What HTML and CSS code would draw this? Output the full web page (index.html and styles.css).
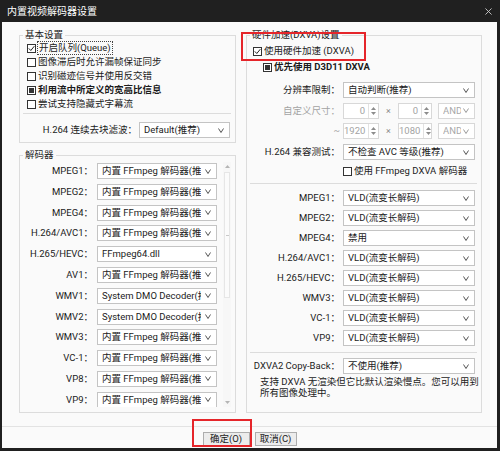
FILE: index.html
```html
<!DOCTYPE html>
<html lang="zh-CN">
<head>
<meta charset="utf-8">
<title>内置视频解码器设置</title>
<link rel="stylesheet" href="styles.css">
</head>
<body>
<div class="window">
  <div class="titlebar">
    <span class="title">内置视频解码器设置</span>
    <svg class="close" viewBox="0 0 8 8"><path d="M0.5 0.5 7.5 7.5 M7.5 0.5 0.5 7.5"/></svg>
  </div>
  <div class="client">
    <div class="main">
      <div class="col-left">
        <fieldset class="group g-basic">
          <legend>基本设置</legend>
          <div class="checks">
            <div class="chk"><span class="box"><svg class="tick" viewBox="0 0 7 7"><path d="M0.8 3.4 2.8 5.5 6.3 1.2"/></svg></span><span class="txt focus">开启队列(Queue)</span></div>
            <div class="chk"><span class="box"></span><span class="txt">图像滞后时允许漏帧保证同步</span></div>
            <div class="chk"><span class="box"></span><span class="txt">识别磁迹信号并使用反交错</span></div>
            <div class="chk"><span class="box ind"><span class="fill"></span></span><span class="txt bold">利用流中所定义的宽高比信息</span></div>
            <div class="chk"><span class="box"></span><span class="txt">尝试支持隐藏式字幕流</span></div>
          </div>
          <div class="sep"></div>
          <div class="deblock">
            <span class="lbl">H.264 连续去块滤波：</span>
            <div class="select w-deblock"><span class="val">Default(推荐)</span><svg class="chev" viewBox="0 0 6 5"><path d="M0.5 0.5 3 4.5 5.5 0.5"/></svg></div>
          </div>
        </fieldset>
        <fieldset class="group g-dec">
          <legend>解码器</legend>
          <div class="scrollarea">
            <div class="dec-list">
              <div class="drow"><span class="lbl">MPEG1：</span><div class="select"><span class="val">内置 FFmpeg 解码器(推荐)</span><svg class="chev" viewBox="0 0 6 5"><path d="M0.5 0.5 3 4.5 5.5 0.5"/></svg></div></div>
              <div class="drow"><span class="lbl">MPEG2：</span><div class="select"><span class="val">内置 FFmpeg 解码器(推荐)</span><svg class="chev" viewBox="0 0 6 5"><path d="M0.5 0.5 3 4.5 5.5 0.5"/></svg></div></div>
              <div class="drow"><span class="lbl">MPEG4：</span><div class="select"><span class="val">内置 FFmpeg 解码器(推荐)</span><svg class="chev" viewBox="0 0 6 5"><path d="M0.5 0.5 3 4.5 5.5 0.5"/></svg></div></div>
              <div class="drow"><span class="lbl">H.264/AVC1：</span><div class="select"><span class="val">内置 FFmpeg 解码器(推荐)</span><svg class="chev" viewBox="0 0 6 5"><path d="M0.5 0.5 3 4.5 5.5 0.5"/></svg></div></div>
              <div class="drow"><span class="lbl">H.265/HEVC：</span><div class="select"><span class="val">FFmpeg64.dll</span><svg class="chev" viewBox="0 0 6 5"><path d="M0.5 0.5 3 4.5 5.5 0.5"/></svg></div></div>
              <div class="drow"><span class="lbl">AV1：</span><div class="select"><span class="val">内置 FFmpeg 解码器(推荐)</span><svg class="chev" viewBox="0 0 6 5"><path d="M0.5 0.5 3 4.5 5.5 0.5"/></svg></div></div>
              <div class="drow"><span class="lbl">WMV1：</span><div class="select"><span class="val">System DMO Decoder(推荐)</span><svg class="chev" viewBox="0 0 6 5"><path d="M0.5 0.5 3 4.5 5.5 0.5"/></svg></div></div>
              <div class="drow"><span class="lbl">WMV2：</span><div class="select"><span class="val">System DMO Decoder(推荐)</span><svg class="chev" viewBox="0 0 6 5"><path d="M0.5 0.5 3 4.5 5.5 0.5"/></svg></div></div>
              <div class="drow"><span class="lbl">WMV3：</span><div class="select"><span class="val">内置 FFmpeg 解码器(推荐)</span><svg class="chev" viewBox="0 0 6 5"><path d="M0.5 0.5 3 4.5 5.5 0.5"/></svg></div></div>
              <div class="drow"><span class="lbl">VC-1：</span><div class="select"><span class="val">内置 FFmpeg 解码器(推荐)</span><svg class="chev" viewBox="0 0 6 5"><path d="M0.5 0.5 3 4.5 5.5 0.5"/></svg></div></div>
              <div class="drow"><span class="lbl">VP8：</span><div class="select"><span class="val">内置 FFmpeg 解码器(推荐)</span><svg class="chev" viewBox="0 0 6 5"><path d="M0.5 0.5 3 4.5 5.5 0.5"/></svg></div></div>
              <div class="drow"><span class="lbl">VP9：</span><div class="select"><span class="val">内置 FFmpeg 解码器(推荐)</span><svg class="chev" viewBox="0 0 6 5"><path d="M0.5 0.5 3 4.5 5.5 0.5"/></svg></div></div>
            </div>
            <div class="vscroll">
              <svg class="sarrow" viewBox="0 0 5 3"><path d="M0 3 2.5 0 5 3Z"/></svg>
              <div class="thumb"><span class="grip"></span></div>
              <svg class="sarrow" viewBox="0 0 5 3"><path d="M0 0 2.5 3 5 0Z"/></svg>
            </div>
          </div>
        </fieldset>
      </div>

      <fieldset class="group g-hw">
        <legend>硬件加速(DXVA)设置</legend>
        <div class="hw-top">
          <div class="chk"><span class="box"><svg class="tick" viewBox="0 0 7 7"><path d="M0.8 3.4 2.8 5.5 6.3 1.2"/></svg></span><span class="txt">使用硬件加速 (DXVA)</span></div>
          <div class="chk sub"><span class="box ind"><span class="fill"></span></span><span class="txt bold">优先使用 D3D11 DXVA</span></div>
        </div>
        <div class="form">
          <span class="lbl">分辨率限制：</span>
          <div class="select"><span class="val">自动判断(推荐)</span><svg class="chev" viewBox="0 0 6 5"><path d="M0.5 0.5 3 4.5 5.5 0.5"/></svg></div>

          <span class="lbl dim">自定义尺寸：</span>
          <div class="sizes">
            <div class="spin s1"><span class="num">0</span><span class="spbtn"><svg viewBox="0 0 5 3"><path d="M0 3 2.5 0 5 3Z"/></svg><svg viewBox="0 0 5 3"><path d="M0 0 2.5 3 5 0Z"/></svg></span></div>
            <span class="times">×</span>
            <div class="spin s2"><span class="num">0</span><span class="spbtn"><svg viewBox="0 0 5 3"><path d="M0 3 2.5 0 5 3Z"/></svg><svg viewBox="0 0 5 3"><path d="M0 0 2.5 3 5 0Z"/></svg></span></div>
            <div class="select dis w-and"><span class="val">AND</span><svg class="chev" viewBox="0 0 6 5"><path d="M0.5 0.5 3 4.5 5.5 0.5"/></svg></div>
          </div>

          <span class="lbl dim">~</span>
          <div class="sizes">
            <div class="spin s1"><span class="num">1920</span><span class="spbtn"><svg viewBox="0 0 5 3"><path d="M0 3 2.5 0 5 3Z"/></svg><svg viewBox="0 0 5 3"><path d="M0 0 2.5 3 5 0Z"/></svg></span></div>
            <span class="times">×</span>
            <div class="spin s2"><span class="num">1080</span><span class="spbtn"><svg viewBox="0 0 5 3"><path d="M0 3 2.5 0 5 3Z"/></svg><svg viewBox="0 0 5 3"><path d="M0 0 2.5 3 5 0Z"/></svg></span></div>
            <div class="select dis w-and"><span class="val">AND</span><svg class="chev" viewBox="0 0 6 5"><path d="M0.5 0.5 3 4.5 5.5 0.5"/></svg></div>
          </div>

          <span class="lbl">H.264 兼容测试：</span>
          <div class="select"><span class="val">不检查 AVC 等级(推荐)</span><svg class="chev" viewBox="0 0 6 5"><path d="M0.5 0.5 3 4.5 5.5 0.5"/></svg></div>
        </div>
        <div class="chk ffdxva"><span class="box"></span><span class="txt">使用 FFmpeg DXVA 解码器</span></div>
        <div class="sep"></div>
        <div class="form dec">
          <span class="lbl">MPEG1：</span>
          <div class="select"><span class="val">VLD(流变长解码)</span><svg class="chev" viewBox="0 0 6 5"><path d="M0.5 0.5 3 4.5 5.5 0.5"/></svg></div>
          <span class="lbl">MPEG2：</span>
          <div class="select"><span class="val">VLD(流变长解码)</span><svg class="chev" viewBox="0 0 6 5"><path d="M0.5 0.5 3 4.5 5.5 0.5"/></svg></div>
          <span class="lbl">MPEG4：</span>
          <div class="select"><span class="val">禁用</span><svg class="chev" viewBox="0 0 6 5"><path d="M0.5 0.5 3 4.5 5.5 0.5"/></svg></div>
          <span class="lbl">H.264/AVC1：</span>
          <div class="select"><span class="val">VLD(流变长解码)</span><svg class="chev" viewBox="0 0 6 5"><path d="M0.5 0.5 3 4.5 5.5 0.5"/></svg></div>
          <span class="lbl">H.265/HEVC：</span>
          <div class="select"><span class="val">VLD(流变长解码)</span><svg class="chev" viewBox="0 0 6 5"><path d="M0.5 0.5 3 4.5 5.5 0.5"/></svg></div>
          <span class="lbl">WMV3：</span>
          <div class="select"><span class="val">VLD(流变长解码)</span><svg class="chev" viewBox="0 0 6 5"><path d="M0.5 0.5 3 4.5 5.5 0.5"/></svg></div>
          <span class="lbl">VC-1：</span>
          <div class="select"><span class="val">VLD(流变长解码)</span><svg class="chev" viewBox="0 0 6 5"><path d="M0.5 0.5 3 4.5 5.5 0.5"/></svg></div>
          <span class="lbl">VP9：</span>
          <div class="select"><span class="val">VLD(流变长解码)</span><svg class="chev" viewBox="0 0 6 5"><path d="M0.5 0.5 3 4.5 5.5 0.5"/></svg></div>
        </div>
        <div class="sep sep2"></div>
        <div class="form copyback">
          <span class="lbl">DXVA2 Copy-Back：</span>
          <div class="select"><span class="val">不使用(推荐)</span><svg class="chev" viewBox="0 0 6 5"><path d="M0.5 0.5 3 4.5 5.5 0.5"/></svg></div>
        </div>
        <p class="note">支持 DXVA 无渲染但它比默认渲染慢点。您可以用到<br>所有图像处理中。</p>
      </fieldset>
    </div>
    <div class="footer">
      <button class="btn ok">确定(O)</button>
      <button class="btn cancel">取消(C)</button>
    </div>
  </div>
  <div class="mark mark-hw"></div>
  <div class="mark mark-ok"></div>
</div>
</body>
</html>
```

FILE: styles.css
```css
* { box-sizing: border-box; }
html, body { margin: 0; padding: 0; }
body {
  width: 500px;
  height: 451px;
  overflow: hidden;
  background: #202020;
  font-family: Roboto, "Noto Sans CJK SC", sans-serif;
  font-size: 9.5px;
  color: #1b1b1b;
}
.window {
  position: relative;
  width: 500px;
  height: 451px;
  background: #202020;
  padding: 0 3px 3px 2px;
  display: flex;
  flex-direction: column;
}
.titlebar {
  height: 22px;
  flex: none;
  display: flex;
  align-items: center;
  justify-content: space-between;
  padding: 1px 5px 0 5px;
  color: #ffffff;
}
.title { font-size: 10px; line-height: 12px; }
.close { width: 7px; height: 7px; fill: none; stroke: #d0d0d0; stroke-width: 1; }

.client {
  flex: 1;
  background: #fafafa;
  display: flex;
  flex-direction: column;
}
.main {
  height: 404px;
  flex: none;
  display: flex;
  gap: 10px;
  padding: 7px 15px 13px 17px;
}
.col-left {
  width: 217px;
  display: flex;
  flex-direction: column;
  gap: 6px;
}
.group {
  margin: 0;
  padding: 0;
  min-width: 0;
  border: 1px solid #dcdcdc;
}
.group legend {
  margin-left: 3px;
  padding: 0 2px;
  font-size: 9.5px;
  line-height: 12px;
  color: #1b1b1b;
}
.g-basic { height: 114px; flex: none; }
.g-dec { flex: 1; }
.g-hw { width: 236px; height: 384px; }

/* checkboxes */
.chk {
  height: 14px;
  display: flex;
  align-items: center;
  white-space: nowrap;
}
.box {
  width: 9px;
  height: 9px;
  flex: none;
  border: 1px solid #333;
  background: #fff;
  margin-right: 2px;
  display: flex;
  align-items: center;
  justify-content: center;
}
.tick { width: 7px; height: 7px; fill: none; stroke: #222; stroke-width: 1; }
.box .fill { width: 5px; height: 5px; background: #333; }
.txt { line-height: 12px; }
.txt.bold { font-weight: 700; }
.txt.focus { outline: 1px dotted #444; outline-offset: 0; padding: 0 1px; }

.checks { padding-left: 7px; }
.sep {
  height: 1px;
  background: #dcdcdc;
  margin: 2px 4px 0 3px;
}

.lbl {
  white-space: nowrap;
  text-align: right;
  line-height: 12px;
}
.lbl.dim { color: #a3a3a3; }

/* select boxes */
.select {
  height: 16px;
  display: flex;
  align-items: center;
  border: 1px solid #c4c4c4;
  background: #fff;
  padding-left: 4px;
  min-width: 0;
}
.select .val {
  flex: 1;
  min-width: 0;
  overflow: hidden;
  white-space: nowrap;
  line-height: 14px;
}
.chev {
  width: 6px;
  height: 5px;
  flex: none;
  margin: 0 5px 0 4px;
  fill: none;
  stroke: #555;
  stroke-width: 1;
}
.select.dis { border-color: #d8d8d8; color: #a8a8a8; }
.select.dis .chev { stroke: #9a9a9a; }

.deblock {
  margin-top: 8px;
  display: flex;
  align-items: center;
  gap: 2px;
}
.deblock .lbl { width: 117px; }
.w-deblock { width: 91px; }

/* decoder list */
.scrollarea {
  height: 246px;
  display: flex;
  overflow: hidden;
}
.dec-list {
  width: 197px;
  padding-top: 2px;
  display: flex;
  flex-direction: column;
  gap: 4.8px;
}
.drow {
  height: 16px;
  flex: none;
  display: flex;
  align-items: center;
}
.drow .lbl { width: 73px; margin-right: 4px; }
.drow .select { width: 120px; }

.vscroll {
  width: 8px;
  margin: 1px 0 0 6px;
  height: 245px;
  display: flex;
  flex-direction: column;
  align-items: center;
  background: #f7f7f7;
  padding: 3px 0;
}
.sarrow { width: 5px; height: 3px; fill: #b5b5b5; flex: none; }
.thumb {
  width: 6px;
  margin: 4px 0;
  height: 126px;
  border: 1px solid #e6e6e6;
  background: #fbfbfb;
  display: flex;
  align-items: center;
  justify-content: center;
}
.thumb .grip { width: 3px; height: 1px; background: #c8c8c8; }
.vscroll .sarrow:last-child { margin-top: auto; }

/* hardware group */
.hw-top { padding: 3px 0 0 6px; }
.chk.sub { margin: 2px 0 0 10px; }
.form {
  display: grid;
  grid-template-columns: 93px 132px;
  grid-auto-rows: 16px;
  column-gap: 3px;
  row-gap: 4.7px;
  align-items: center;
  margin-top: 8px;
}
.sizes {
  display: flex;
  align-items: center;
  height: 16px;
}
.spin {
  height: 16px;
  display: flex;
  border: 1px solid #d8d8d8;
  background: #fff;
  color: #a3a3a3;
}
.spin.s1 { width: 36px; }
.spin.s2 { width: 34px; }
.spin .num {
  flex: 1;
  text-align: right;
  padding-right: 3px;
  line-height: 14px;
}
.spbtn {
  width: 10px;
  flex: none;
  border-left: 1px solid #e2e2e2;
  display: flex;
  flex-direction: column;
  justify-content: center;
  align-items: center;
  gap: 2px;
}
.spbtn svg { width: 5px; height: 3px; fill: #8c8c8c; }
.times {
  width: 19px;
  text-align: center;
  color: #8a8a8a;
  font-size: 9px;
}
.w-and { width: 37px; margin-left: 6px; }
.w-and .chev { margin-left: 2px; }

.ffdxva { margin: 4px 0 0 96px; }
.g-hw .sep { margin: 5px 4px 0 3px; }
.form.dec { margin-top: 6px; row-gap: 4px; }
.g-hw .sep.sep2 { margin-top: 6px; }
.form.copyback { margin-top: 5px; }

.note {
  margin: 2px 0 0 13px;
  line-height: 11px;
  white-space: nowrap;
}

/* footer */
.footer {
  flex: 1;
  border-top: 1px solid #e3e3e3;
  display: flex;
  justify-content: center;
  align-items: flex-start;
  gap: 5px;
  padding-top: 5px;
}
.btn {
  height: 14px;
  margin: 0;
  padding: 0;
  border: 1px solid #adadad;
  background: #ececec;
  font-family: inherit;
  font-size: 9.5px;
  line-height: 12px;
  color: #1b1b1b;
}
.btn.ok { width: 47px; }
.btn.cancel { width: 42px; }

/* red annotation frames */
.mark {
  position: absolute;
  border: 2px solid #e5252a;
}
.mark-hw { left: 241px; top: 32px; width: 125px; height: 29px; }
.mark-ok { left: 192px; top: 419px; width: 60px; height: 28px; }
```
